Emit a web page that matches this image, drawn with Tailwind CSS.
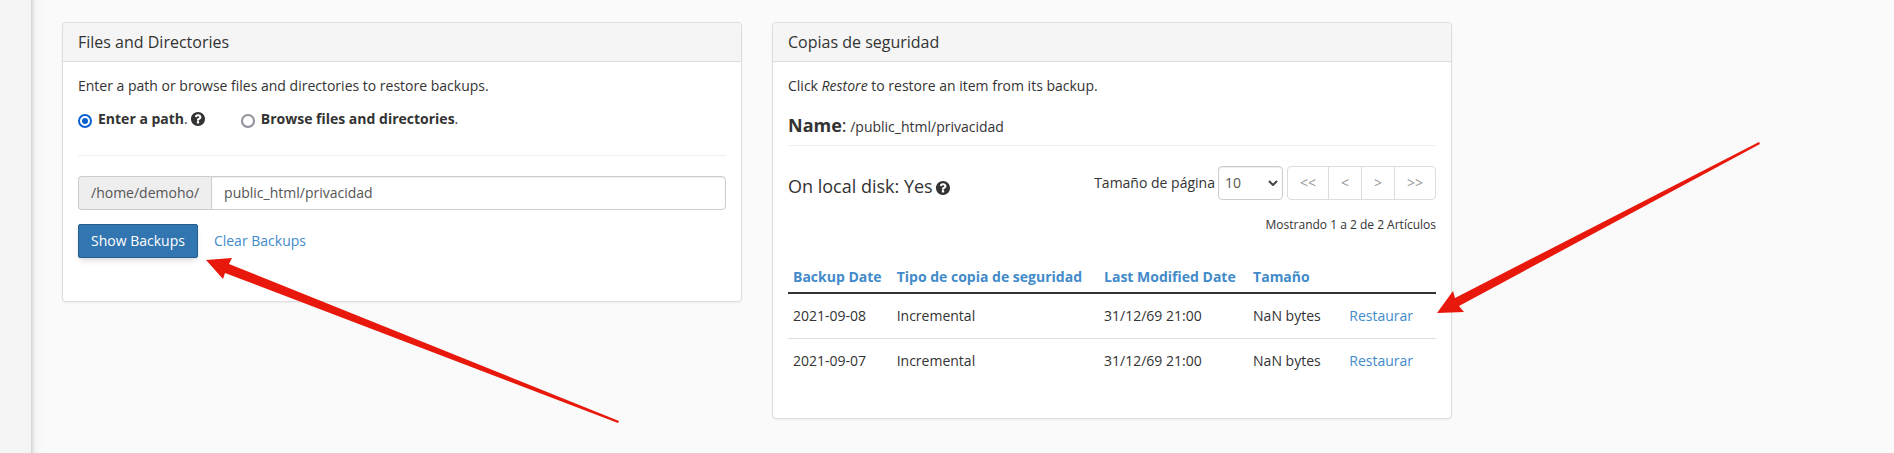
<!DOCTYPE html>
<html lang="es">
<head>
  <meta charset="UTF-8">
  <meta name="viewport" content="width=device-width, initial-scale=1.0">
  <title>Restore Backups</title>
  <script src="https://cdn.jsdelivr.net/npm/@tailwindcss/browser@4"></script>
</head>
<body class="relative flex min-h-screen overflow-x-hidden bg-[#fafafa] font-['Open_Sans','Noto_Sans',sans-serif] text-sm text-[#333333]">
  <!-- Sidebar edge -->
  <aside class="w-[31px] shrink-0 bg-[#f5f5f5]"></aside>

  <main class="min-w-0 flex-1 bg-linear-to-r from-[#d4d4d4] via-[#f4f4f4] via-[4px] to-[#fafafa] to-[12px] pt-[22px] pr-4 pb-8 pl-[31px]">
    <div class="grid max-w-[1390px] grid-cols-2 items-start gap-[30px]">

      <!-- Files and Directories -->
      <section class="rounded border border-[#dddddd] bg-white shadow-xs">
        <h2 class="rounded-t border-b border-[#dddddd] bg-[#f5f5f5] px-[15px] py-[10px] text-base leading-[18px]">Files and Directories</h2>
        <div class="px-[15px] pt-[14px] pb-[43px]">
          <p class="leading-5">Enter a path or browse files and directories to restore backups.</p>
          <div class="mt-[13px] flex gap-9 leading-5">
            <div class="flex items-center">
              <input type="radio" name="mode" id="modePath" checked class="mt-1 mr-[6px] size-[14px] appearance-none rounded-full border-2 border-[#0a5fd0] bg-[#0a5fd0] bg-clip-content p-[2px]">
              <label for="modePath"><b>Enter a path</b>.</label>
              <svg class="ml-[3px] size-[14px]" viewBox="8 8 496 496" fill="#333333" aria-hidden="true"><path d="M504 256c0 137-111 248-248 248S8 393 8 256 119 8 256 8s248 111 248 248zM263 90c-55 0-89 23-117 64-3 5-2 12 3 16l34 26c5 4 13 3 17-2 18-23 30-36 57-36 20 0 46 13 46 33 0 15-12 22-32 33-23 13-54 29-54 70v10c0 7 5 12 12 12h54c7 0 12-5 12-12v-3c0-28 83-29 83-106 0-58-60-105-115-105zm-7 238a46 46 0 1 0 0 92 46 46 0 0 0 0-92z"/></svg>
            </div>
            <div class="flex items-center">
              <input type="radio" name="mode" id="modeBrowse" class="mt-1 mr-[6px] size-[14px] appearance-none rounded-full border-2 border-[#8f8f9d] bg-white">
              <label for="modeBrowse"><b>Browse files and directories</b>.</label>
            </div>
          </div>
          <hr class="mt-[26px] mb-5 border-[#eeeeee]">
          <div class="flex h-[34px] text-[#555555]">
            <label for="path" class="rounded-l border border-r-0 border-[#cccccc] bg-[#eeeeee] px-3 leading-8">/home/demoho/</label>
            <input type="text" id="path" value="public_html/privacidad" class="min-w-0 flex-1 rounded-r border border-[#cccccc] bg-white px-3 shadow-[inset_0_1px_1px_rgb(0_0_0/0.075)]">
          </div>
          <div class="mt-[14px] flex items-center gap-4">
            <button type="button" class="h-[34px] rounded-xs border border-[#285e8e] bg-[#3276b1] px-3 text-white shadow-md">Show Backups</button>
            <a href="#" class="text-[#428bca]">Clear Backups</a>
          </div>
        </div>
      </section>

      <!-- Backups -->
      <section class="rounded border border-[#dddddd] bg-white shadow-xs">
        <h2 class="rounded-t border-b border-[#dddddd] bg-[#f5f5f5] px-[15px] py-[10px] text-base leading-[18px]">Copias de seguridad</h2>
        <div class="px-[15px] pt-[14px] pb-[35px]">
          <p class="leading-5">Click <em>Restore</em> to restore an item from its backup.</p>
          <p class="mt-[15px] leading-7"><span class="text-lg leading-7"><b>Name</b>:</span> /public_html/privacidad</p>
          <hr class="mt-1 mb-5 border-[#eeeeee]">

          <div class="flex items-start justify-between">
            <h3 class="flex items-center pt-2 text-lg leading-6">On local disk: Yes
              <svg class="mt-1 ml-[3px] size-[14px]" viewBox="8 8 496 496" fill="#333333" aria-hidden="true"><path d="M504 256c0 137-111 248-248 248S8 393 8 256 119 8 256 8s248 111 248 248zM263 90c-55 0-89 23-117 64-3 5-2 12 3 16l34 26c5 4 13 3 17-2 18-23 30-36 57-36 20 0 46 13 46 33 0 15-12 22-32 33-23 13-54 29-54 70v10c0 7 5 12 12 12h54c7 0 12-5 12-12v-3c0-28 83-29 83-106 0-58-60-105-115-105zm-7 238a46 46 0 1 0 0 92 46 46 0 0 0 0-92z"/></svg>
            </h3>
            <div class="flex items-center">
              <label for="pageSize" class="mr-[3px]">Tamaño de página</label>
              <div class="relative mr-1">
                <select id="pageSize" class="h-[34px] w-[65px] appearance-none rounded border border-[#cccccc] bg-white px-[6px] text-[#555555] shadow-[inset_0_1px_1px_rgb(0_0_0/0.075)]">
                  <option>10</option>
                  <option>20</option>
                  <option>50</option>
                </select>
                <svg class="pointer-events-none absolute top-[14px] right-[5px] h-[6px] w-[10px]" viewBox="0 0 10 6" fill="none" stroke="#444444" stroke-width="2" aria-hidden="true"><path d="M1 1l4 4 4-4"/></svg>
              </div>
              <div class="flex h-[34px] divide-x divide-[#dddddd] rounded border border-[#dddddd] text-[#999999]">
                <button type="button" class="px-3">&lt;&lt;</button>
                <button type="button" class="px-3">&lt;</button>
                <button type="button" class="px-3">&gt;</button>
                <button type="button" class="px-3">&gt;&gt;</button>
              </div>
            </div>
          </div>
          <p class="mt-[17px] text-right text-xs leading-4">Mostrando 1 a 2 de 2 Artículos</p>

          <table class="mt-[29px] w-full table-fixed text-left leading-5">
            <colgroup>
              <col class="w-[16%]">
              <col class="w-[32%]">
              <col class="w-[23%]">
              <col class="w-[15%]">
              <col class="w-[14%]">
            </colgroup>
            <thead class="border-b-2 border-[#333333] text-[#428bca]">
              <tr>
                <th class="px-[5px] pt-[5px] pb-[5px]"><a href="#">Backup Date</a></th>
                <th class="px-[5px]"><a href="#">Tipo de copia de seguridad</a></th>
                <th class="px-[5px]"><a href="#">Last Modified Date</a></th>
                <th class="px-[5px]"><a href="#">Tamaño</a></th>
                <th></th>
              </tr>
            </thead>
            <tbody class="divide-y divide-[#dddddd]">
              <tr>
                <td class="px-[5px] py-3">2021-09-08</td>
                <td class="px-[5px]">Incremental</td>
                <td class="px-[5px]">31/12/69 21:00</td>
                <td class="px-[5px]">NaN bytes</td>
                <td class="px-[4px]"><a href="#" class="text-[#428bca]">Restaurar</a></td>
              </tr>
              <tr>
                <td class="px-[5px] py-3">2021-09-07</td>
                <td class="px-[5px]">Incremental</td>
                <td class="px-[5px]">31/12/69 21:00</td>
                <td class="px-[5px]">NaN bytes</td>
                <td class="px-[4px]"><a href="#" class="text-[#428bca]">Restaurar</a></td>
              </tr>
            </tbody>
          </table>
        </div>
      </section>
    </div>
  </main>

  <!-- Annotation arrows -->
  <svg class="pointer-events-none absolute top-[258px] left-[206px] h-[165px] w-[413px]" viewBox="206 258 413 165" fill="#e8190c" aria-hidden="true">
    <path d="M206 260L232 258L229 264L619 421L618 423L225 273L223 279Z"/>
  </svg>
  <svg class="pointer-events-none absolute top-[141px] left-[1437px] h-[172px] w-[323px]" viewBox="1437 141 323 172" fill="#e8190c" aria-hidden="true">
    <path d="M1437 313L1453 291L1455 298L1759 142L1760 144L1459 306L1464 312Z"/>
  </svg>
</body>
</html>
